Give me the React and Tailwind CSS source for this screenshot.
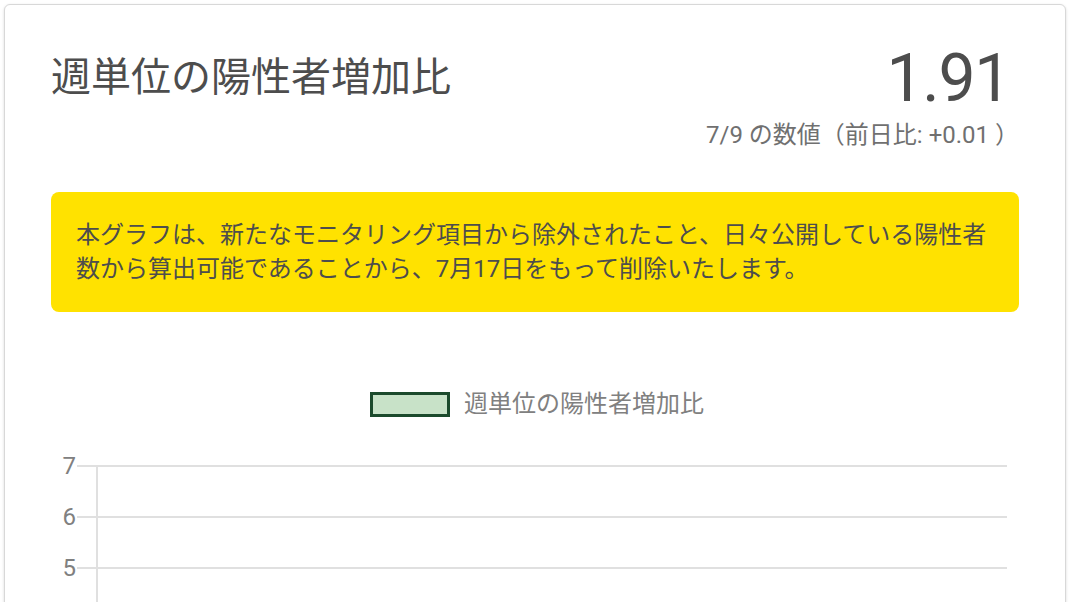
const FONT = "font-['Roboto','Noto_Sans_CJK_JP',sans-serif]";

const ticks = [7, 6, 5];

const App = () => {
  return (
    <div className={`h-[602px] overflow-hidden bg-white p-1 ${FONT}`}>
      <div className="rounded-md border border-[#d8d8d8] bg-white px-[46px] pt-[40px] shadow-[0_1px_3px_rgba(0,0,0,0.15)] min-h-[700px]">
        {/* header */}
        <div className="flex items-start justify-between">
          <h2 className="text-[40px] leading-[56px] font-normal text-[#4d4d4d] mt-[5px]">週単位の陽性者増加比</h2>
          <div className="flex flex-col items-end text-right">
            <span className="mr-[9px] text-[66px] leading-[68px] tracking-[-0.02em] text-[#4d4d4d]">1.91</span>
            <span className="text-[24px] leading-[32px] text-[#707070] mt-[6px]">7/9 の数値（前日比: +0.01 ）</span>
          </div>
        </div>

        {/* notice */}
        <div className="mt-[41px] rounded-lg bg-[#ffe200] px-[25px] py-[26px] text-[24px] leading-[34px] text-[#4d4d4d]">
          本グラフは、新たなモニタリング項目から除外されたこと、日々公開している陽性者数から算出可能であることから、7月17日をもって削除いたします。
        </div>

        {/* legend */}
        <div className="mt-[76px] ml-[4px] flex items-center justify-center gap-[14px]">
          <div className="h-[25px] w-[80px] shrink-0 border-[3px] border-[#1b4a2c] bg-[#c8e2c8]" />
          <span className="text-[24px] leading-[32px] text-[#808080]">週単位の陽性者増加比</span>
        </div>

        {/* chart */}
        <div className="relative mt-[20px] mr-[12px] pb-[80px]">
          <div className="absolute left-[45px] top-[25px] bottom-0 w-[2px] bg-[#e0e0e0]" />
          {ticks.map((t) => (
            <div key={t} className="flex h-[51px] items-center">
              <span className="w-[26px] pr-[1px] text-right text-[24px] leading-none text-[#808080]">{t}</span>
              <div className="h-[2px] flex-1 bg-[#e0e0e0]" />
            </div>
          ))}
        </div>
      </div>
    </div>
  );
};

export default App;
